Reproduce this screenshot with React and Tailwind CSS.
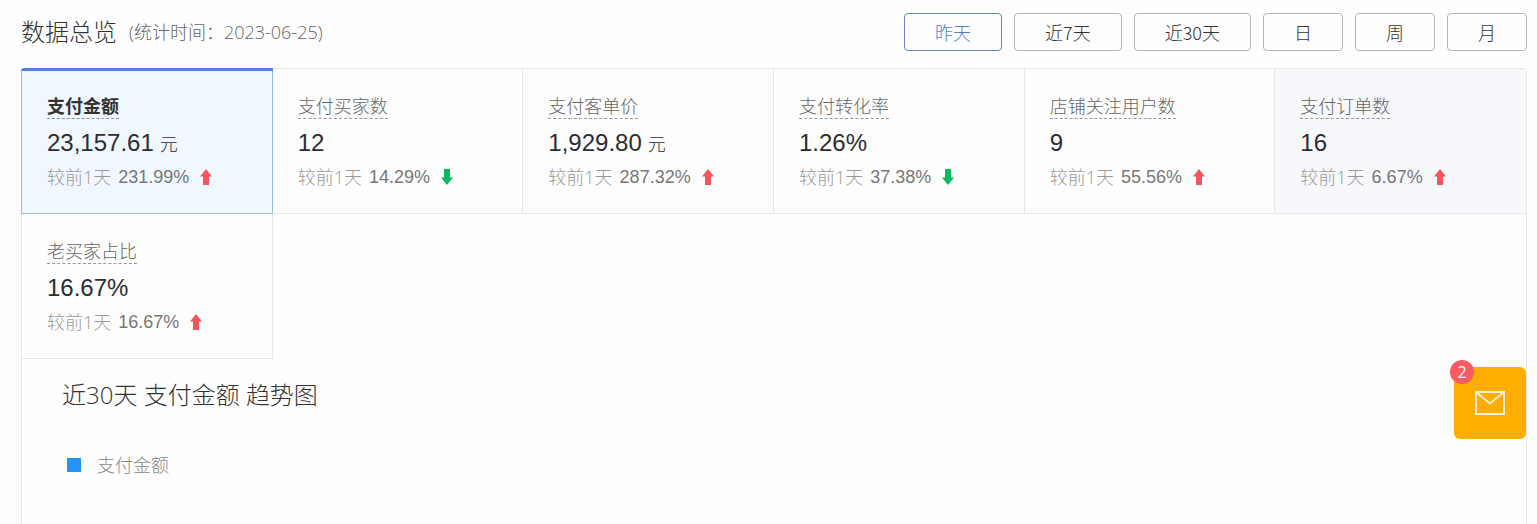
import { useState } from "react";
import clsx from "clsx";

const RANGES = ["昨天", "近7天", "近30天", "日", "周", "月"];

const METRICS = [
    { id: "amount", label: "支付金额", value: "23,157.61", unit: "元", change: "231.99%", up: true },
    { id: "buyers", label: "支付买家数", value: "12", change: "14.29%", up: false },
    { id: "perBuyer", label: "支付客单价", value: "1,929.80", unit: "元", change: "287.32%", up: true },
    { id: "conversion", label: "支付转化率", value: "1.26%", change: "37.38%", up: false },
    { id: "followers", label: "店铺关注用户数", value: "9", change: "55.56%", up: true },
    { id: "orders", label: "支付订单数", value: "16", change: "6.67%", up: true, highlighted: true },
    { id: "returning", label: "老买家占比", value: "16.67%", change: "16.67%", up: true },
];

function TrendArrow({ up }) {
    return (
        <svg
            viewBox="0 0 12 16"
            className={clsx("h-4 w-3 shrink-0", up ? "fill-[#f8545c]" : "rotate-180 fill-[#07b95f]")}
            aria-hidden="true"
        >
            <path d="M6 0 12 7.5H9V16H3V7.5H0Z" />
        </svg>
    );
}

function MetricCard({ metric, selected, onSelect }) {
    return (
        <button
            type="button"
            aria-pressed={selected}
            onClick={onSelect}
            className={clsx(
                "relative flex h-[145px] flex-col items-start border-r border-b pl-[25px] text-left nth-[6n]:border-r-0",
                selected
                    ? "rounded-tl border-[#94bedb] bg-[#f0f7ff] shadow-[-1px_0_0_#94bedb]"
                    : "border-[#e8e8ea]",
                metric.highlighted && "bg-[#f7f8fb]"
            )}
        >
            {selected && <span className="absolute -top-px -right-px -left-px h-[3px] rounded-tl bg-[#5580dc]" />}
            <span
                className={clsx(
                    "mt-[26px] border-b border-dashed text-lg leading-[23px]",
                    selected ? "border-[#8d9299] font-bold text-[#333]" : "border-[#999] font-light text-[#666]"
                )}
            >
                {metric.label}
            </span>
            <span className="mt-2 flex h-8 items-baseline gap-1.5 font-['Liberation_Sans','Noto_Sans_CJK_SC',sans-serif] text-2xl leading-8 text-[#2b2d35]">
                {metric.value}
                {metric.unit && <span className="text-lg leading-8 font-light">{metric.unit}</span>}
            </span>
            <span className="mt-1 flex items-center text-lg leading-7">
                <span className="font-light text-[#999]">较前1天</span>
                <span className="mr-[11px] ml-[7px] font-['Liberation_Sans',sans-serif] text-[#777]">
                    {metric.change}
                </span>
                <TrendArrow up={metric.up} />
            </span>
        </button>
    );
}

export default function App() {
    const [range, setRange] = useState("昨天");
    const [selectedId, setSelectedId] = useState("amount");
    const selected = METRICS.find((m) => m.id === selectedId);

    return (
        <div className="relative flex h-screen flex-col overflow-hidden bg-[#fefefe] pr-[10px] pl-[21px] font-['Open_Sans','Noto_Sans_CJK_SC',sans-serif]">
            <header className="flex items-center justify-between pt-[13px]">
                <div className="flex items-center gap-3">
                    <h1 className="text-2xl leading-8 font-light text-[#333]">数据总览</h1>
                    <p className="text-lg leading-7 font-light text-[#666]">(统计时间：2023-06-25)</p>
                </div>
                <div className="flex gap-3 font-['Noto_Sans_CJK_SC',sans-serif]">
                    {RANGES.map((item) => (
                        <button
                            key={item}
                            type="button"
                            aria-pressed={item === range}
                            onClick={() => setRange(item)}
                            className={clsx(
                                "h-[38px] rounded border px-[30px] text-lg leading-7 font-light",
                                item === range ? "border-[#5f88c4] text-[#4d7ed0]" : "border-[#b4b4b8] text-[#333]"
                            )}
                        >
                            {item}
                        </button>
                    ))}
                </div>
            </header>

            <main className="mt-[17px] flex-1 rounded-t border border-b-0 border-[#e8e8ea]">
                <div className="grid grid-cols-6">
                    {METRICS.map((metric) => (
                        <MetricCard
                            key={metric.id}
                            metric={metric}
                            selected={metric.id === selectedId}
                            onSelect={() => setSelectedId(metric.id)}
                        />
                    ))}
                </div>

                {/* Trend chart header */}
                <section className="px-10 pt-[18px]">
                    <h2 className="text-2xl leading-9 font-light text-[#333]">近30天 {selected.label} 趋势图</h2>
                    <div className="mt-[38px] flex items-center gap-4 pl-[5px]">
                        <span className="size-[14px] bg-[#2494f2]" />
                        <span className="text-lg leading-7 font-light text-[#888]">{selected.label}</span>
                    </div>
                </section>
            </main>

            {/* Floating inbox button */}
            <button
                type="button"
                aria-label="消息"
                className="absolute right-[11px] bottom-[85px] flex size-[72px] items-center justify-center rounded-md bg-[#ffad00]"
            >
                <svg viewBox="0 0 30 24" className="h-6 w-[30px] fill-none stroke-[#fff3cf] stroke-2" aria-hidden="true">
                    <path d="M1 1H29V23H1Z" />
                    <path d="M1.5 1.5 15 12.5 28.5 1.5" />
                </svg>
                <span className="absolute -top-[7px] -left-1 flex size-6 items-center justify-center rounded-full bg-[#fa5a60] text-base leading-6 text-white">
                    2
                </span>
            </button>
        </div>
    );
}
